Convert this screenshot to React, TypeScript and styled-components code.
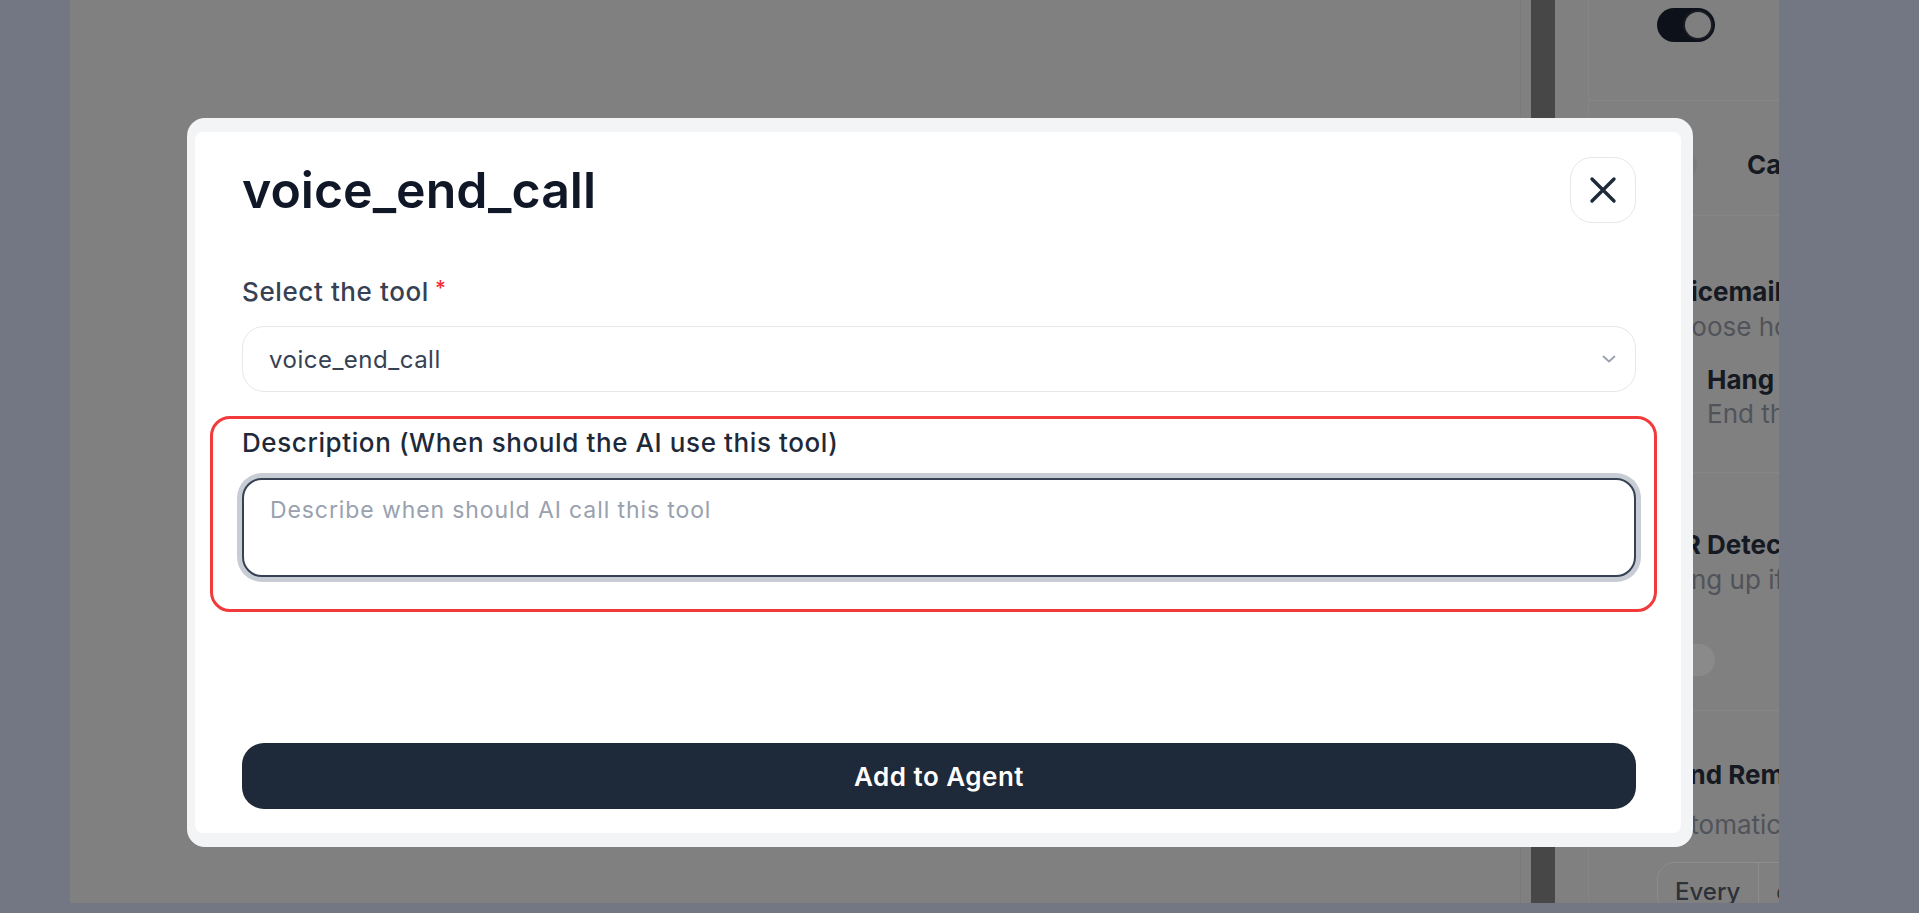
import styled, { createGlobalStyle } from "styled-components";

const GlobalStyle = createGlobalStyle`
  html, body {
    margin: 0;
    padding: 0;
  }
  body {
    width: 1919px;
    height: 913px;
    overflow: hidden;
    background: #737783;
    font-family: Inter, "Noto Sans", sans-serif;
  }
  * {
    box-sizing: border-box;
  }
`;

const Screen = styled.div`
  height: 913px;
  padding: 0 140px 10px 70px;
`;

const Dimmed = styled.div`
  display: flex;
  height: 903px;
  background: #808080;
`;

const MainArea = styled.div`
  flex: 1;
  border-right: 1px solid #7a7a7a;
`;

const ScrollGutter = styled.div`
  width: 67px;
  padding-left: 10px;
  display: flex;
`;

const ScrollThumb = styled.div`
  width: 24px;
  background: #474747;
`;

const SettingsPanel = styled.div`
  width: 191px;
  border-left: 1px solid #858585;
  overflow: hidden;
  white-space: nowrap;
`;

const PanelSection = styled.div<{ $pad: number; $height?: number; $line?: boolean }>`
  padding: ${(p) => p.$pad}px 0 0 68px;
  height: ${(p) => (p.$height ? `${p.$height}px` : "auto")};
  border-bottom: ${(p) => (p.$line ? "1px solid #868686" : "none")};
`;

const Toggle = styled.div<{ $on?: boolean; $mt?: number }>`
  margin-top: ${(p) => p.$mt ?? 0}px;
  width: 58px;
  height: ${(p) => (p.$on ? 34 : 32)}px;
  border-radius: 17px;
  background: ${(p) => (p.$on ? "#0d111a" : "#8a8a8a")};
  display: flex;
  align-items: center;
  justify-content: ${(p) => (p.$on ? "flex-end" : "flex-start")};
  padding: 2px;
`;

const Knob = styled.div`
  width: 30px;
  height: 30px;
  border-radius: 50%;
  background: #7f7f7f;
  border: 2px solid #1a1d24;
`;

const TabRow = styled.div`
  display: flex;
  align-items: center;
  gap: 50px;
  padding-left: 6px;
`;

const TabDot = styled.div`
  width: 34px;
  height: 34px;
  border-radius: 50%;
  background: #7a7a7a;
  flex-shrink: 0;
`;

const PanelTitle = styled.div<{ $mt?: number; $indent?: number }>`
  margin-top: ${(p) => p.$mt ?? 0}px;
  padding-left: ${(p) => p.$indent ?? 0}px;
  font-size: 26px;
  line-height: 32px;
  font-weight: 700;
  color: #151922;
`;

const PanelText = styled.div<{ $mt?: number; $indent?: number }>`
  margin-top: ${(p) => p.$mt ?? 0}px;
  padding-left: ${(p) => p.$indent ?? 0}px;
  font-size: 26px;
  line-height: 31px;
  color: #50535a;
`;

const Segmented = styled.div`
  margin-top: 22px;
  display: flex;
  height: 52px;
  width: 260px;
  border: 1px solid #8e8e8e;
  border-radius: 18px;
  overflow: hidden;
`;

const Segment = styled.div<{ $w: number }>`
  width: ${(p) => p.$w}px;
  padding: 14px 0 0 17px;
  font-size: 24px;
  font-weight: 500;
  color: #2e3138;
  border-right: 1px solid #8e8e8e;
`;

const DialogFrame = styled.div`
  position: fixed;
  left: 187px;
  top: 118px;
  width: 1506px;
  height: 729px;
  background: #f3f4f6;
  border-radius: 18px;
  padding: 14px 12px 14px 8px;
`;

const DialogBody = styled.div`
  height: 100%;
  background: #ffffff;
  border-radius: 8px;
  padding: 25px 45px 24px 47px;
  display: flex;
  flex-direction: column;
`;

const Header = styled.div`
  display: flex;
  align-items: center;
  justify-content: space-between;
  height: 66px;
`;

const Title = styled.h2`
  margin: 0;
  font-size: 50px;
  font-weight: 600;
  color: #101828;
`;

const CloseButton = styled.button`
  width: 66px;
  height: 66px;
  border: 1.5px solid #e5e7eb;
  border-radius: 22px;
  background: #ffffff;
  display: flex;
  align-items: center;
  justify-content: center;
  padding: 0;
  cursor: pointer;
`;

const FieldLabel = styled.label<{ $mt?: number; $strong?: boolean }>`
  display: block;
  margin-top: ${(p) => p.$mt ?? 0}px;
  font-size: 26px;
  line-height: 32px;
  letter-spacing: 0.6px;
  font-weight: 500;
  color: ${(p) => (p.$strong ? "#1e2939" : "#364153")};
`;

const Required = styled.span`
  color: #fb2c36;
  font-size: 21px;
  vertical-align: top;
  margin-left: 6px;
  line-height: 26px;
`;

const SelectBox = styled.div`
  margin-top: 18px;
  height: 66px;
  border: 1.5px solid #e5e7eb;
  border-radius: 22px;
  display: flex;
  align-items: center;
  justify-content: space-between;
  padding: 0 19px 0 26px;
  font-size: 24px;
  letter-spacing: 0.5px;
  color: #364153;
`;

const Highlight = styled.div`
  margin: 24px -21px 0 -32px;
  border: 3px solid #f23a3a;
  border-radius: 20px;
  padding: 8px 18px 32px 29px;
`;

const TextArea = styled.textarea`
  display: block;
  width: 100%;
  margin-top: 19px;
  height: 99px;
  border: 2px solid #364153;
  border-radius: 20px;
  box-shadow: 0 0 0 5px #c8ccd4;
  padding: 15px 26px;
  font-family: Inter, "Noto Sans", sans-serif;
  font-size: 23px;
  letter-spacing: 0.9px;
  line-height: 30px;
  resize: none;
  outline: none;
  color: #1e2939;

  &::placeholder {
    color: #99a1af;
  }
`;

const SubmitButton = styled.button`
  margin-top: auto;
  height: 66px;
  width: 100%;
  border: none;
  border-radius: 22px;
  background: #1e2939;
  color: #ffffff;
  font-family: Inter, "Noto Sans", sans-serif;
  font-size: 26px;
  letter-spacing: 0.5px;
  font-weight: 600;
  cursor: pointer;
`;

const CloseIcon = () => (
  <svg width="28" height="28" viewBox="0 0 28 28" fill="none">
    <path
      d="M3 3L25 25M25 3L3 25"
      stroke="#1e2939"
      strokeWidth="3.4"
      strokeLinecap="round"
    />
  </svg>
);

const Chevron = () => (
  <svg width="14" height="8" viewBox="0 0 14 8" fill="none">
    <path
      d="M1.5 1.5L7 6.5L12.5 1.5"
      stroke="#99a1af"
      strokeWidth="1.8"
      strokeLinecap="round"
      strokeLinejoin="round"
    />
  </svg>
);

const App = () => {
  return (
    <>
      <GlobalStyle />
      <Screen>
        <Dimmed>
          <MainArea />
          <ScrollGutter>
            <ScrollThumb />
          </ScrollGutter>
          <SettingsPanel>
            <PanelSection $pad={8} $height={101} $line>
              <Toggle $on>
                <Knob />
              </Toggle>
            </PanelSection>
            <PanelSection $pad={47} $height={115} $line>
              <TabRow>
                <TabDot />
                <PanelTitle>Call settings</PanelTitle>
              </TabRow>
            </PanelSection>
            <PanelSection $pad={60} $height={257} $line>
              <PanelTitle>Voicemail Detection</PanelTitle>
              <PanelText $mt={3}>Choose how to handle voicemail</PanelText>
              <PanelTitle $mt={22} $indent={50}>
                Hang up
              </PanelTitle>
              <PanelText $mt={2} $indent={50}>
                End the call immediately
              </PanelText>
            </PanelSection>
            <PanelSection $pad={56} $height={238} $line>
              <PanelTitle>IVR Detection</PanelTitle>
              <PanelText $mt={3}>Hang up if an IVR is detected</PanelText>
              <Toggle $mt={49} />
            </PanelSection>
            <PanelSection $pad={48}>
              <PanelTitle>Send Reminder</PanelTitle>
              <PanelText $mt={18}>Automatically remind</PanelText>
              <Segmented>
                <Segment $w={102}>Every</Segment>
                <Segment $w={158}>day</Segment>
              </Segmented>
            </PanelSection>
          </SettingsPanel>
        </Dimmed>
      </Screen>

      <DialogFrame>
        <DialogBody>
          <Header>
            <Title>voice_end_call</Title>
            <CloseButton aria-label="Close">
              <CloseIcon />
            </CloseButton>
          </Header>

          <FieldLabel $mt={53}>
            Select the tool
            <Required>*</Required>
          </FieldLabel>
          <SelectBox>
            <span>voice_end_call</span>
            <Chevron />
          </SelectBox>

          <Highlight>
            <FieldLabel $strong>
              Description (When should the AI use this tool)
            </FieldLabel>
            <TextArea placeholder="Describe when should AI call this tool" />
          </Highlight>

          <SubmitButton>Add to Agent</SubmitButton>
        </DialogBody>
      </DialogFrame>
    </>
  );
};

export default App;
